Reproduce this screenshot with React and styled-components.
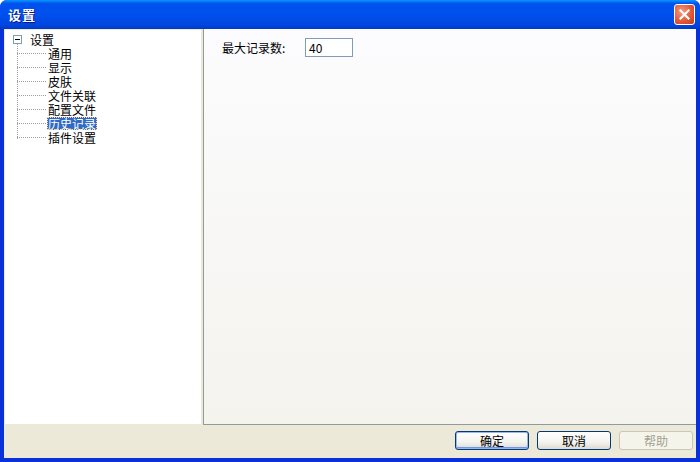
import React from "react";
import styled, { createGlobalStyle } from "styled-components";

const Global = createGlobalStyle`
  html, body { margin: 0; padding: 0; background: #fff; }
  * { box-sizing: border-box; }
`;

const font = `"Noto Sans CJK SC", "DejaVu Sans", sans-serif`;

const Window = styled.div`
  width: 700px;
  height: 462px;
  display: flex;
  flex-direction: column;
  background: #0831d9;
  border-radius: 7px 7px 0 0;
  overflow: hidden;
  font-family: ${font};
  font-size: 12px;
`;

const TitleBar = styled.div`
  height: 29px;
  flex-shrink: 0;
  display: flex;
  align-items: center;
  justify-content: space-between;
  padding: 0 5px 0 8px;
  background: linear-gradient(180deg, #0997ff 0%, #0053ee 12%, #0050ee 50%, #0046e0 85%, #0039c8 100%);
`;

const Title = styled.div`
  color: #fff;
  font-weight: bold;
  font-size: 13px;
  text-shadow: 1px 1px 0 #0a1883;
  letter-spacing: 1px;
`;

const CloseBtn = styled.div`
  width: 21px;
  height: 21px;
  border: 1px solid #fff;
  border-radius: 3px;
  background: radial-gradient(circle at 35% 35%, #f59a7c 0%, #e2593a 55%, #c33a17 100%);
  display: flex;
  align-items: center;
  justify-content: center;
`;

const Client = styled.div`
  flex: 1;
  margin: 0 4px 4px 4px;
  background: #ece9d8;
  display: flex;
  flex-direction: column;
`;

const Body = styled.div`
  flex: 1;
  display: flex;
  gap: 2px;
  padding: 1px 0 0 1px;
`;

const TreePanel = styled.div`
  width: 196px;
  background: #fff;
  margin-bottom: 1px;
  padding: 2px 0 0 8px;
  position: relative;
`;

const TreeRoot = styled.div`
  display: flex;
  align-items: center;
  height: 14px;
  gap: 8px;
`;

const MinusBox = styled.div`
  width: 9px;
  height: 9px;
  border: 1px solid #7f9db9;
  background: #fff;
  display: flex;
  align-items: center;
  justify-content: center;
  position: relative;
  z-index: 1;
  &::after {
    content: "";
    width: 5px;
    height: 1px;
    background: #000;
  }
`;

const TreeList = styled.div`
  position: relative;
  padding-left: 35px;
`;

const VLine = styled.div`
  position: absolute;
  left: 4px;
  top: -3px;
  height: 96px;
  border-left: 1px dotted #a0a0a0;
`;

const Item = styled.div`
  position: relative;
  height: 14px;
  display: flex;
  align-items: center;
  &::before {
    content: "";
    position: absolute;
    left: -31px;
    top: 7px;
    width: 29px;
    border-top: 1px dotted #a0a0a0;
  }
`;

const Label = styled.span`
  display: inline-block;
  height: 13px;
  line-height: 13px;
  padding: 0 1px;
  color: ${p => (p.$selected ? "#fff" : "#000")};
  background: ${p => (p.$selected ? "#316ac5" : "transparent")};
  outline: ${p => (p.$selected ? "1px dotted #ffe38a" : "none")};
  outline-offset: -1px;
  margin-left: -1px;
`;

const RootLabel = styled.span`
  line-height: 13px;
  color: #000;
`;

const ContentPanel = styled.div`
  flex: 1;
  margin-top: -1px;
  background: linear-gradient(180deg, #fcfcfe 0%, #f4f3ee 100%);
  border-left: 1px solid #919b9c;
  border-bottom: 1px solid #919b9c;
  padding: 9px 0 0 18px;
`;

const Row = styled.div`
  display: flex;
  align-items: center;
  gap: 16px;
`;

const FieldLabel = styled.span`
  color: #000;
  width: 67px;
`;

const Input = styled.div`
  width: 48px;
  height: 19px;
  border: 1px solid #7f9db9;
  background: #fff;
  padding: 0 3px;
  line-height: 17px;
  color: #000;
`;

const Footer = styled.div`
  height: 33px;
  flex-shrink: 0;
  display: flex;
  justify-content: flex-end;
  align-items: center;
  gap: 8px;
  padding: 0 3px 2px 0;
`;

const Button = styled.div`
  width: 74px;
  height: 19px;
  border: 1px solid ${p => (p.$disabled ? "#c9c7ba" : "#003c74")};
  border-radius: 3px;
  background: ${p => (p.$disabled ? "#f5f4ea" : "linear-gradient(180deg, #ffffff 0%, #f3f3ef 60%, #dcdad0 100%)")};
  color: ${p => (p.$disabled ? "#a1a192" : "#000")};
  display: flex;
  align-items: center;
  justify-content: center;
  box-shadow: ${p => (p.$default ? "inset 0 0 0 1px #99b6f2, inset 0 -1px 0 1px #6f96e5" : "none")};
`;

const items = ["通用", "显示", "皮肤", "文件关联", "配置文件", "历史记录", "插件设置"];

export default function App() {
  return (
    <>
      <Global />
      <Window>
        <TitleBar>
          <Title>设置</Title>
          <CloseBtn>
            <svg width="11" height="11" viewBox="0 0 11 11">
              <path d="M1.5 1.5 L9.5 9.5 M9.5 1.5 L1.5 9.5" stroke="#fff" strokeWidth="2.2" strokeLinecap="square" />
            </svg>
          </CloseBtn>
        </TitleBar>
        <Client>
          <Body>
            <TreePanel>
              <TreeRoot>
                <MinusBox />
                <RootLabel>设置</RootLabel>
              </TreeRoot>
              <TreeList>
                <VLine />
                {items.map(t => (
                  <Item key={t}>
                    <Label $selected={t === "历史记录"}>{t}</Label>
                  </Item>
                ))}
              </TreeList>
            </TreePanel>
            <ContentPanel>
              <Row>
                <FieldLabel>最大记录数:</FieldLabel>
                <Input>40</Input>
              </Row>
            </ContentPanel>
          </Body>
          <Footer>
            <Button $default>确定</Button>
            <Button>取消</Button>
            <Button $disabled>帮助</Button>
          </Footer>
        </Client>
      </Window>
    </>
  );
}
